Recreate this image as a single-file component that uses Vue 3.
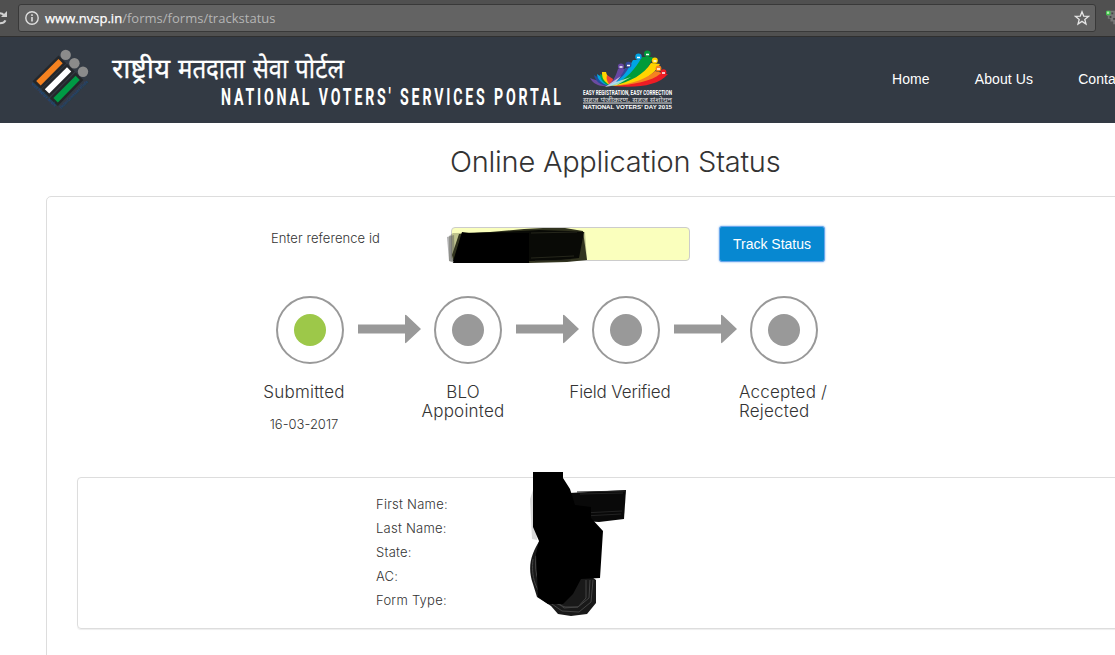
<template>
  <div class="page">
    <div class="browser-bar">
      <svg class="reload" width="9" height="16" viewBox="0 0 9 16">
        <path d="M0 13.300c2.500 0 4.600-1 5.500-3M0 3.200c1.700 0 3 .7 4 1.900" fill="none" stroke="#d0d0d0" stroke-width="2" />
        <path d="M7 1v6H1z" fill="#d0d0d0" />
      </svg>
      <div class="address">
        <svg width="14" height="14" viewBox="0 0 14 14">
          <circle cx="7" cy="7" r="6.200" fill="none" stroke="#dedede" stroke-width="1.400" />
          <path d="M6.200 6h1.600v4.500H6.200zM6.200 3.300h1.600v1.600H6.200z" fill="#dedede" />
        </svg>
        <div class="url"><b>www.nvsp.in</b>/forms/forms/trackstatus</div>
        <svg class="star" width="16" height="16" viewBox="0 0 16 16">
          <path d="M8 1.800l1.700 4.300 4.700.3-3.600 3 1.200 4.600L8 11.400 4 14l1.200-4.600-3.600-3 4.700-.3z" fill="none" stroke="#e6e6e6" stroke-width="1.300" />
        </svg>
      </div>
      <svg class="extension" width="10" height="18" viewBox="0 0 10 18">
        <path d="M1 2h9v15H8v-3H5v-3H2V8H1z" fill="#777" />
        <path d="M6 4h2v2H6zM4 8h2v2H4zM8 10h2v2H8z" fill="#444" />
        <rect x="0" y="2" width="5" height="5" rx="1" fill="#3fbd49" />
        <rect x="1" y="3" width="2.500" height="2.500" fill="#aef0ae" />
      </svg>
    </div>

    <header class="header">
      <svg class="brand" width="700" height="86" viewBox="0 37 700 86">
        <!-- 选举委员会标志 -->
        <g class="bars">
          <path d="M58.500 59l4.200 4.200-22 22.200-4.500-4.300z" fill="#f58220" />
          <path d="M67 67.300l4.200 4.200-22 22-4.400-4.300z" fill="#fff" />
          <path d="M75.600 75.700l4.200 4.200-22 22.500-4.400-4.300z" fill="#009a44" />
        </g>
        <g fill="#8b8b8b">
          <circle cx="65.700" cy="54.900" r="5.200" />
          <circle cx="74.400" cy="63.200" r="5.200" />
          <circle cx="83" cy="71.800" r="5.200" />
        </g>
        <text transform="translate(31 84) rotate(44)" class="seal" textLength="33">भारत निर्वाचन आयोग</text>
        <text transform="translate(61.500 109) rotate(-45)" class="seal" textLength="38" lengthAdjust="spacingAndGlyphs">Election Commission of India</text>

        <text
          v-for="word in hindiTitle"
          :key="word.text"
          :x="word.x"
          y="78"
          class="hindi"
          :textLength="word.width"
          lengthAdjust="spacingAndGlyphs"
        >{{ word.text }}</text>
        <text transform="translate(221 105) scale(.59 1)" class="portal" textLength="576">NATIONAL VOTERS' SERVICES PORTAL</text>

        <!-- 选民日标志 -->
        <path d="M608 86c-8 1-15-2-18-8 7 3 12 2 18 8z" fill="#6b4ba0" />
        <path d="M608 86c-8-1-13-5-14-11 6 4 12 4 14 11z" fill="#244c9b" />
        <path d="M609 86c-7-2-12-7-12-12 6 4 10 5 12 12z" fill="#00a5df" />
        <path d="M609 86c-6-3-9-7-9-12 5 2 9 5 9 12z" fill="#00a14b" />
        <path d="M608 84c-5-4-6-6-6-12h4c1 5 5 6 5 12z" fill="#ffd400" />
        <path d="M609 84c-2-3-3-5-2-9l6 4c0 3-2 5-4 5z" fill="#ef4136" />
        <path d="M606 86c7-4 9-8 12-17h8c-4 8-9 14-20 17z" fill="#6647a2" />
        <path d="M606 86c10-4 16-10 19-18h7c-3 9-12 16-26 18z" fill="#34489a" />
        <path d="M607 86c16-6 20-15 26-26h9c-7 15-17 24-35 26z" fill="#00a4e4" />
        <path d="M610 86c17-6 25-17 32-29h11c-7 18-20 29-43 29z" fill="#009b3a" />
        <path d="M612 86c19-4 32-12 39-23l9 1c-8 14-24 22-48 22z" fill="#ffd400" />
        <path d="M613 86c20-2 35-8 42-15l8 2c-9 8-25 13-50 13z" fill="#f58220" />
        <path d="M613 86c20-1 39-5 47-12h8c-10 12-31 14-55 12z" fill="#ed1c24" />
        <path d="M605 87l16-11-5 6 15-5-14 8z" fill="#fff" opacity=".65" />
        <g>
          <circle cx="621" cy="66.500" r="3.100" fill="#6647a2" />
          <circle cx="628.500" cy="64.800" r="3" fill="#34489a" />
          <circle cx="638.500" cy="56.800" r="3.200" fill="#00a4e4" />
          <circle cx="647.300" cy="53.800" r="3.200" fill="#009b3a" />
          <circle cx="654.800" cy="60.500" r="3" fill="#ffd400" />
          <circle cx="658.500" cy="68.500" r="2.900" fill="#f58220" />
          <circle cx="663.500" cy="72.200" r="2.900" fill="#ed1c24" />
        </g>
        <path d="M619.500 67h3M627 65.500h3M637 57.500h3M646 54.500h3M653.500 61h3M657 69h3M662 73h3" stroke="#fff" stroke-width="1.300" />
        <text x="583" y="95" class="slogan" textLength="89" lengthAdjust="spacingAndGlyphs">EASY REGISTRATION, EASY CORRECTION</text>
        <text x="583" y="101.500" class="slogan-hindi" textLength="89" lengthAdjust="spacingAndGlyphs">सहज पंजीकरण, सहज संशोधन</text>
        <path d="M583 103h89" stroke="#ddd" stroke-width="1" />
        <text x="583" y="109.200" class="voters-day" textLength="89" lengthAdjust="spacingAndGlyphs">NATIONAL VOTERS' DAY 2015</text>
      </svg>
      <nav class="nav">
        <a v-for="item in menu" :key="item">{{ item }}</a>
      </nav>
    </header>

    <h1 class="title">Online Application Status</h1>

    <main class="panel">
      <div class="search-row">
        <label for="reference">Enter reference id</label>
        <div class="reference">
          <input id="reference" type="text" />
          <svg class="redaction" width="146" height="40" viewBox="445 225 146 40">
            <path d="M449 236l4-3 132-1 2 28-133 3-5-2z" fill="#34371f" opacity=".3" />
            <path d="M447 237l7-2 1 27-6-1z" fill="#555" opacity=".45" />
            <path d="M459 234l31-2 34-3 19-1 22 0 18 3 4 29-20 2-38 1-75-1-2-7z" fill="#32341f" />
            <path d="M462 233l37-1 22-1 18-1 29 1 16 1-5 26-18 2-31 1h-77z" fill="#090a06" />
            <path d="M462 232l7 1h60v30h-76z" fill="#000" />
            <path d="M531 233l46-1M531 258l43-2M535 261l36-1" stroke="#25261b" stroke-width="1" />
          </svg>
        </div>
        <button class="track-btn">Track Status</button>
      </div>

      <div class="steps">
        <div v-for="(step, index) in steps" :key="step.label" class="step">
          <div class="step-graphic">
            <div class="ring"><div class="dot" :class="{ active: step.done }"></div></div>
            <svg v-if="index < steps.length - 1" class="arrow" width="64" height="30" viewBox="0 0 64 30">
              <path d="M0 10.500h47V1.500q0-1.500 1.500-.3L63 15 48.500 28.500Q47 30 47 28v-8.500H0z" fill="#999" />
            </svg>
          </div>
          <div class="step-label" :class="step.align">{{ step.label }}</div>
          <div v-if="step.date" class="step-date">{{ step.date }}</div>
        </div>
      </div>

      <section class="details">
        <div v-for="field in fields" :key="field" class="detail-row">{{ field }}:</div>
        <svg class="detail-redaction" width="102" height="150" viewBox="528 470 102 150">
          <path d="M533 490l-3 9 2 40 5 1z" fill="#aaa" opacity=".45" />
          <path d="M569 493l57-3-2 29-25 3-31-2z" fill="#090909" />
          <path d="M577 492l49-1M580 494l43-1M584 516l37-2M583 513l39-2" stroke="#222" stroke-width="1" />
          <path d="M540 540c-9 14-13 27-7 44l4 13 14 9 7 8 13 2 16-2 9-11v-23z" fill="#191919" />
          <path d="M533 559c-2 18 2 32 16 43l13 9 17 1 12-10 2-22M536 556c-2 20 3 31 14 40l14 12 14-1 11-9 1-18M555 603l10 4h13l8-9v-18" fill="none" stroke="#444" stroke-width="1" />
          <path d="M533 472h30v6l7 11 5 16 16 2v11l12 13-3 47-19 1-8 15-10 10h-15l-10-7-2-43 3-13-6-14z" fill="#000" />
        </svg>
      </section>
    </main>
  </div>
</template>

<script setup>
const menu = ['Home', 'About Us', 'Contact Us'];

const hindiTitle = [
  { text: 'राष्ट्रीय', x: 112, width: 58 },
  { text: 'मतदाता', x: 178, width: 67 },
  { text: 'सेवा', x: 253, width: 35 },
  { text: 'पोर्टल', x: 295, width: 49 }
];

const steps = [
  { label: 'Submitted', date: '16-03-2017', done: true },
  { label: 'BLO\nAppointed', align: 'appointed' },
  { label: 'Field Verified', align: 'verified' },
  { label: 'Accepted /\nRejected', align: 'result' }
];

const fields = ['First Name', 'Last Name', 'State', 'AC', 'Form Type'];
</script>

<style>
body {
  overflow: hidden;
}
</style>

<style scoped>
* {
  box-sizing: border-box;
}

.page {
  width: 1115px;
  height: 655px;
  overflow: hidden;
  background: #fff;
  color: #333;
  font-family: Inter, "Liberation Sans", sans-serif;
  font-weight: 300;
}

.browser-bar {
  height: 37px;
  padding-top: 4px;
  display: flex;
  background: #505050;
  border-bottom: 1px solid #303030;
}

.reload {
  margin-top: 6px;
  flex: none;
}

.address {
  width: 1078px;
  height: 28px;
  margin-left: 9px;
  padding: 0 5px 0 6px;
  display: flex;
  align-items: center;
  flex: none;
  border: 1px solid #393939;
  border-radius: 3px;
  background: #636363;
}

.url {
  margin-left: 6px;
  color: #b5b5b5;
  font: 400 13px/20px "Open Sans", sans-serif;
  letter-spacing: 0.02px;
}

.url b {
  color: #fff;
  font-weight: 400;
  -webkit-text-stroke: 0.25px #fff;
}

.star {
  margin-left: auto;
}

.extension {
  margin: 4px 0 0 10px;
}

.header {
  height: 86px;
  display: flex;
  background: #333a44;
}

.brand {
  flex: none;
}

.bars path {
  stroke: #24272b;
  stroke-width: 5px;
  paint-order: stroke;
}

.seal {
  fill: #164a80;
  font: 600 4px "Noto Sans", sans-serif;
}

.hindi {
  fill: #fff;
  stroke: #fff;
  stroke-width: 0.3px;
  font: 400 27px "Noto Sans Devanagari", "Noto Sans", sans-serif;
}

.portal {
  fill: #fff;
  font: 700 24px Roboto, sans-serif;
}

.slogan {
  fill: #fff;
  font: 700 6.5px Roboto, sans-serif;
}

.slogan-hindi {
  fill: #ddd;
  font: 400 6px "Noto Sans Devanagari", "Noto Sans", sans-serif;
}

.voters-day {
  fill: #fff;
  font: 700 6px "Liberation Sans", sans-serif;
}

.nav {
  margin-left: 192px;
  padding-top: 32px;
  display: flex;
  gap: 45px;
  color: #fff;
  font: 400 14px/20px "Liberation Sans", Arial, sans-serif;
  letter-spacing: 0.1px;
  white-space: nowrap;
}

.title {
  height: 73px;
  margin: 0;
  padding: 21px 0 0 450px;
  font-size: 29px;
  line-height: 36px;
  font-weight: 300;
  letter-spacing: -0.25px;
  white-space: nowrap;
}

.panel {
  width: 1140px;
  height: 500px;
  margin-left: 46px;
  padding: 29px 0 0 30px;
  border: 1px solid #ddd;
  border-radius: 5px;
}

.search-row {
  height: 37px;
  padding-left: 194px;
  display: flex;
  align-items: flex-start;
}

.search-row label {
  width: 180px;
  padding-top: 3px;
  font-size: 13px;
  line-height: 18px;
  letter-spacing: 0.07px;
}

.reference {
  position: relative;
  width: 239px;
  height: 36px;
  padding-top: 1px;
}

.reference input {
  width: 239px;
  height: 34px;
  display: block;
  border: 1px solid #ccc;
  border-radius: 4px;
  background: #faffbd;
}

.redaction {
  position: absolute;
  left: -6px;
  top: -1px;
}

.track-btn {
  width: 106px;
  height: 36px;
  margin-left: 29px;
  padding: 0;
  border: 1px solid #69a7ed;
  border-radius: 3px;
  background: #0788d1;
  box-shadow: 0 0 2px #69a7ed;
  color: #fff;
  font: 400 14px "Liberation Sans", Arial, sans-serif;
}

.steps {
  height: 213px;
  padding: 33px 0 0 199px;
  display: flex;
}

.step {
  width: 158px;
  flex: none;
}

.step-graphic {
  height: 68px;
  display: flex;
}

.ring {
  width: 68px;
  height: 68px;
  display: flex;
  align-items: center;
  justify-content: center;
  border: 2px solid #999;
  border-radius: 50%;
}

.dot {
  width: 32px;
  height: 32px;
  border-radius: 50%;
  background: #999;
}

.dot.active {
  background: #9dc849;
}

.arrow {
  margin: 18px 0 0 14px;
}

.step-label {
  width: 110px;
  margin: 19px 0 0 -27px;
  font-size: 17px;
  line-height: 19px;
  letter-spacing: 0.2px;
  text-align: center;
  white-space: pre;
}

.step-label.appointed {
  margin-left: -26px;
}

.step-label.verified {
  margin-left: -27px;
  letter-spacing: -0.15px;
}

.step-label.result {
  margin-left: -11px;
  text-align: left;
}

.step-date {
  width: 110px;
  margin: 13px 0 0 -27px;
  font-size: 13px;
  line-height: 18px;
  text-align: center;
}

.details {
  position: relative;
  width: 1080px;
  height: 152px;
  margin-top: 1px;
  padding: 14px 0 0 298px;
  border: 1px solid #ddd;
  border-radius: 4px;
  box-shadow: 0 1px 1px #eee;
}

.detail-row {
  height: 24px;
  font-size: 13px;
  line-height: 24px;
  letter-spacing: 0.25px;
}

.detail-redaction {
  position: absolute;
  left: 450px;
  top: -8px;
}
</style>
